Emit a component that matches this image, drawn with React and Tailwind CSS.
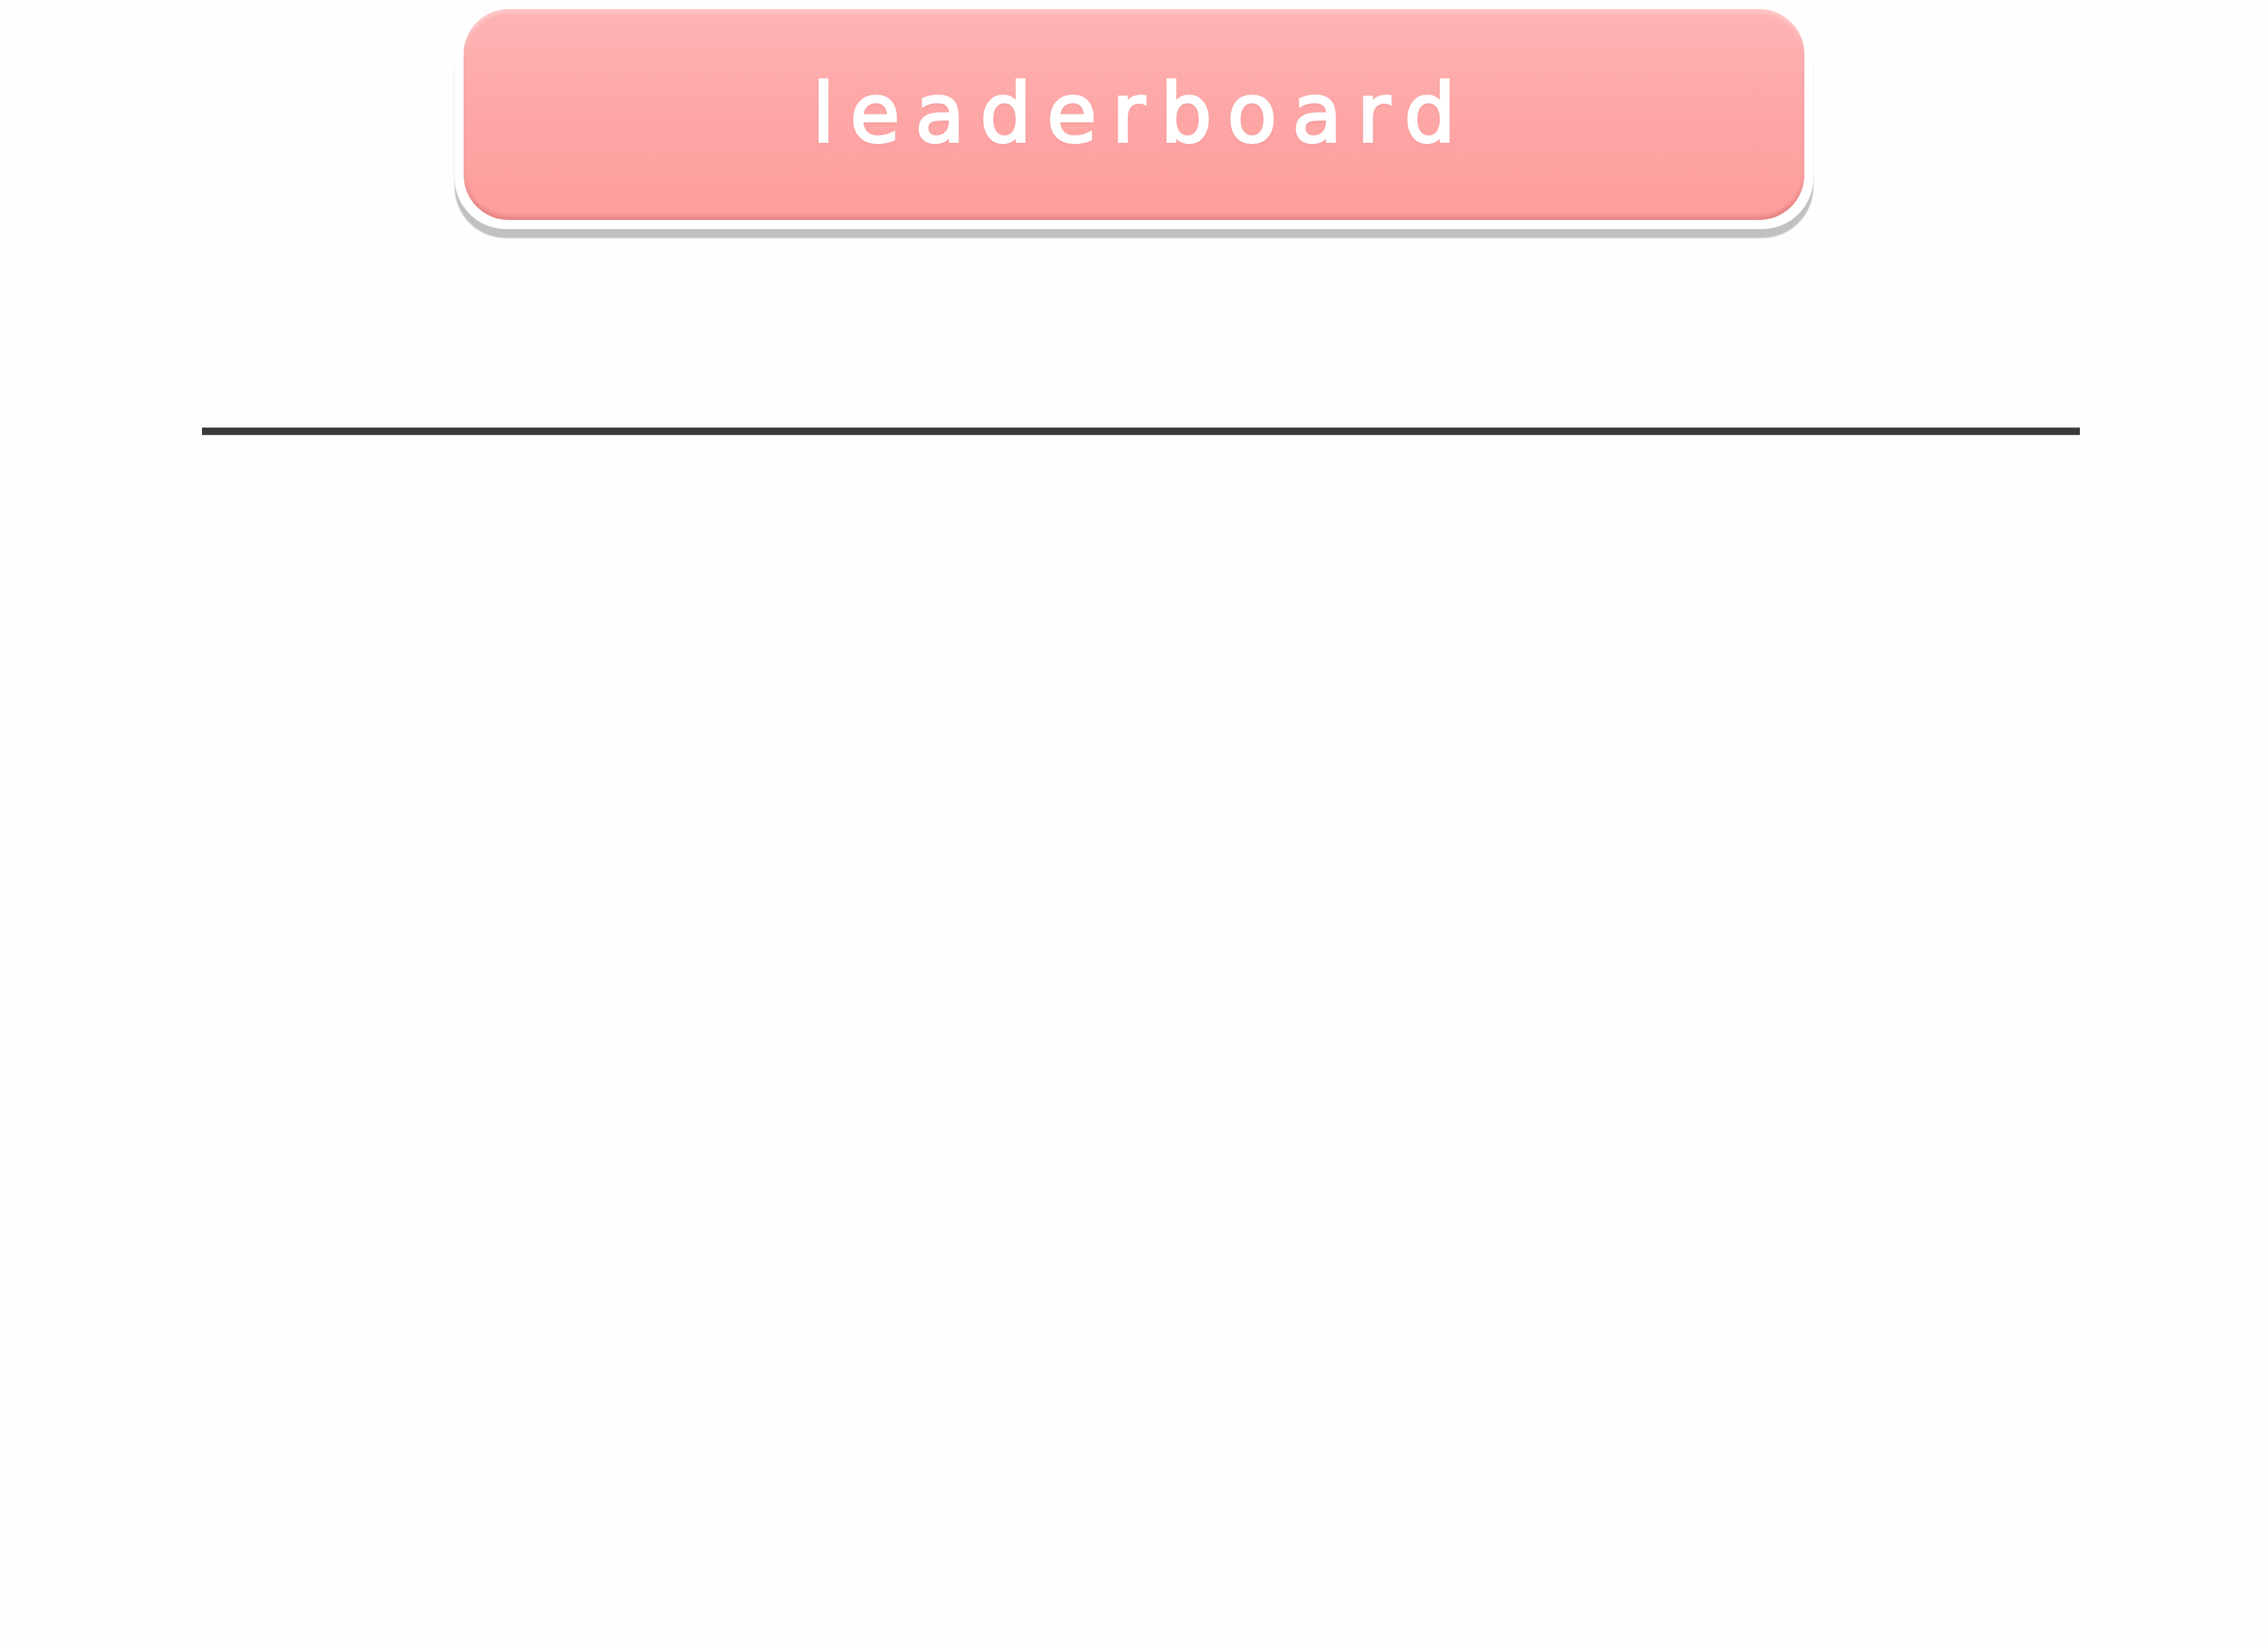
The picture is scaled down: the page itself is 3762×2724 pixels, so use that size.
export default function App() {
  return (
    <div className="min-h-screen w-full bg-[#fefefe] pt-[15px]" style={{ fontFamily: '"DejaVu Sans", sans-serif' }}>
      {/* pushable title button */}
      <div className="mx-auto w-[2254px] rounded-[85px] bg-white px-[15px] pb-[15px] shadow-[0_15px_2px_#c1c1c1]">
        <div className="flex h-[350px] items-center justify-center rounded-[75px] bg-gradient-to-b from-[#ffb4b4] via-[#fea6a6] to-[#fd9c9c] shadow-[inset_0_6px_6px_rgba(255,255,255,0.3),inset_0_-6px_6px_rgba(140,40,40,0.22)]">
          <span className="pl-[25px] pb-[4px] text-[135px] font-normal leading-none tracking-[25px] text-white [-webkit-text-stroke:4px_white] [text-shadow:0_2px_5px_rgba(120,40,40,0.15)]">
            leaderboard
          </span>
        </div>
      </div>

      {/* divider */}
      <div className="mt-[329px] flex pl-[335px] pr-[312px]">
        <div className="h-[13px] flex-1 border-y border-[#7a7a7a] bg-[#3a3a3a]" />
      </div>
    </div>
  );
}
